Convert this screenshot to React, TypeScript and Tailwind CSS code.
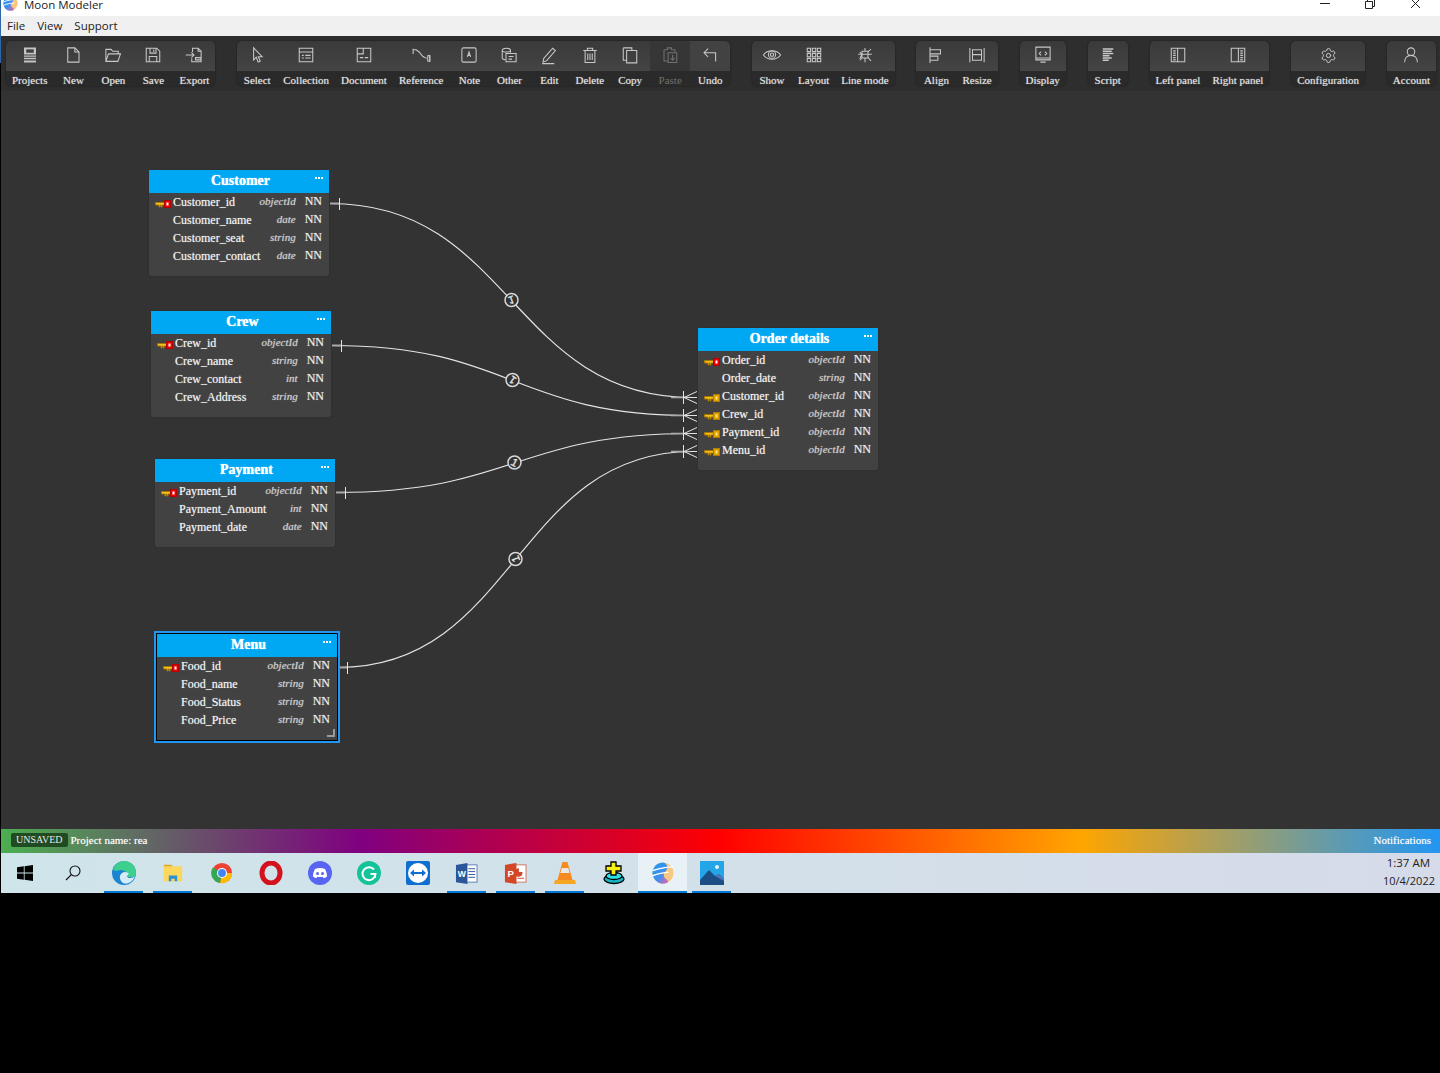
import React from 'react';
import { Settings } from 'lucide-react';

const S = 'stroke-[#c8c8c8] fill-none';
const HALO = '[text-shadow:0_0_1px_rgba(255,255,255,0.55)]';

// toolbar glyphs, all in a 24x24 box
const icons: Record<string, React.ReactNode> = {
  projects: (
    <g>
      <rect x="4" y="2" width="16" height="20" fill="#c4c4c4" stroke="none" />
      <rect x="7" y="4.500" width="10" height="4.500" fill="#3f3f3f" stroke="none" />
      <path d="M4 12h16M4 15h16M4 18.500h16" stroke="#3f3f3f" />
    </g>
  ),
  new: <path d="M5 2.500h9.500L20 8v13.500H5zM14.500 2.500V8H20" />,
  open: <path d="M2.500 20.500V4.500h7l2 2.500h7.500v3M2.500 20.500l3.500-10h16l-3.500 10z" />,
  save: <path d="M3 3h14l4 4v14H3zM8 3v6.500h8V3M13 4.500v3.500M7 21v-7h10v7" />,
  export: <path d="M10 8V3h7.500l4 4v14H9v-4.500M17.500 3v4h4M1 12h10.500M8.500 8.500L12 12l-3.500 3.500M14 15.500h7v3h-7z" />,
  select: <path d="M7.500 2.500v16l3.500-3.500 2.500 6.500 2.800-1.200-2.500-6h5z" />,
  collection: <path d="M3 3h18v18H3zM3 8h18M6.500 12.500H9M11 12.500h7M6.500 16H9M11 16h7" />,
  document: <path d="M3 3h18v18H3zM3 10.500h8V3M6.500 15.500H11M13 15.500h4.500" />,
  reference: <path d="M1.500 3.500v7M1.500 5h4l4 3 5 6 5 2.500M24 12.500v8M21 13l2.500-.5v8L21 20z" />,
  note: <path d="M4.500 2.500h15a2 2 0 0 1 2 2v15a2 2 0 0 1-2 2h-15a2 2 0 0 1-2-2v-15a2 2 0 0 1 2-2zM9.800 14.500l2.200-6.500 2.200 6.500M10.500 12.500h3" />,
  other: <path d="M3 6c0-4 11-4 11 0v3M3 6v10c0 1.200 1.500 2 4 2.300M3 6c0 2.800 11 2.800 11 0M8 10h13.500v11H8zM11.500 14H18M11.500 17.500H16" />,
  edit: <path d="M5 16.500L17 3l3.500 3L9 19.500l-5 2zM3 23.500h16" />,
  trash: <path d="M3 6h18M8.500 6V3h7v3M5.500 6v16h13V6M9 10v8.500M12 10v8.500M15 10v8.500" />,
  copy: <path d="M3 2.500h11.500V6M3 2.500V19h4.500M7.500 6H21v16.500H7.500z" />,
  paste: <path d="M4 5h4.500V2.500h5.500V5h4.500v3M4 5v15h5M9.500 9H21v13H9.500zM15.500 11.500v7.500M12.500 16l3 3 3-3" />,
  undo: <path d="M9.500 3.500L4 9l5.500 5.500M4 9h15.500v11.500" />,
  show: (
    <g>
      <path d="M0.500 12c5.500-7.500 17.500-7.500 23 0-5.500 7.500-17.500 7.500-23 0z" />
      <circle cx="12" cy="11.500" r="4.800" />
      <circle cx="12" cy="11.500" r="2.200" />
    </g>
  ),
  layout: <path d="M3 3h4.500v4.500H3zM9.800 3h4.500v4.500H9.800zM16.500 3H21v4.500h-4.500zM3 9.800h4.500v4.500H3zM9.800 9.800h4.500v4.500H9.800zM16.500 9.800H21v4.500h-4.500zM3 16.500h4.500V21H3zM9.800 16.500h4.500V21H9.800zM16.500 16.500H21V21h-4.500z" />,
  linemode: <path d="M3 11h18M5 8l3 3-3 6M20 4l-4 4v7l4 5M8 7h8v9H8zM12 2.500v5M12 16v5.500M8 16l-3 3" />,
  align: <path d="M4 1.500v21M4 5h14v5.500H4M4 13.500h10.500V19H4" />,
  resize: <path d="M2.500 2.500v19M21.500 2.500v19M6 5h12v6.500H6zM6 11.500h12V19H6z" />,
  display: <path d="M2.500 1.500h19v17h-19zM2.500 16h19M8.500 21.500h7M9.500 7.500L7 10l2.500 2.500M14.500 7.500L17 10l-2.500 2.500" />,
  script: <path d="M5 4h14M5 7h12M5 10h14M5 13h9M5 16h12M5 19h8" strokeWidth="2.200" />,
  leftpanel: <path d="M3 3h18v18H3zM11.500 3v18M5.500 6.500h3.500M5.500 9.500H9M5.500 12.500H9M5.500 15.500H9M5.500 18.500H9" />,
  rightpanel: <path d="M3 3h18v18H3zM12.500 3v18M15 6.500h3.500M15 9.500h3.500M15 12.500h3.500M15 15.500h3.500M15 18.500h3.500" />,
  account: <path d="M12 2.500a5 5 0 1 0 0 10 5 5 0 0 0 0-10zM3.500 21.500c0-5.500 3.500-9 8.500-9s8.500 3.500 8.500 9" />,
};

type Tool = { label: string; icon: string };

const groups: Tool[][] = [
  [
    { label: 'Projects', icon: 'projects' },
    { label: 'New', icon: 'new' },
    { label: 'Open', icon: 'open' },
    { label: 'Save', icon: 'save' },
    { label: 'Export', icon: 'export' },
  ],
  [
    { label: 'Select', icon: 'select' },
    { label: 'Collection', icon: 'collection' },
    { label: 'Document', icon: 'document' },
    { label: 'Reference', icon: 'reference' },
    { label: 'Note', icon: 'note' },
    { label: 'Other', icon: 'other' },
    { label: 'Edit', icon: 'edit' },
    { label: 'Delete', icon: 'trash' },
    { label: 'Copy', icon: 'copy' },
    { label: 'Paste', icon: 'paste' },
    { label: 'Undo', icon: 'undo' },
  ],
  [
    { label: 'Show', icon: 'show' },
    { label: 'Layout', icon: 'layout' },
    { label: 'Line mode', icon: 'linemode' },
  ],
  [
    { label: 'Align', icon: 'align' },
    { label: 'Resize', icon: 'resize' },
  ],
  [{ label: 'Display', icon: 'display' }],
  [{ label: 'Script', icon: 'script' }],
  [
    { label: 'Left panel', icon: 'leftpanel' },
    { label: 'Right panel', icon: 'rightpanel' },
  ],
  [{ label: 'Configuration', icon: 'gear' }],
  [{ label: 'Account', icon: 'account' }],
];

function ToolButton({ tool }: { tool: Tool }) {
  const disabled = tool.label === 'Paste';
  const topClass = disabled
    ? 'bg-[#363636]'
    : tool.label === 'Undo'
    ? 'bg-[#424242]'
    : 'bg-linear-to-b from-[#3a3a3a] to-[#444444]';
  return (
    <div className="flex flex-col min-w-10 items-stretch">
      <div className={`h-[30px] pb-[2px] flex items-center justify-center ${topClass}`}>
        {tool.icon === 'gear' ? (
          <Settings className="w-[17px] h-[17px] text-[#cccccc]" strokeWidth={1.4} />
        ) : (
          <svg
            viewBox="0 0 24 24"
            className={`w-[18px] h-[18px] overflow-visible ${S} ${disabled ? 'opacity-40' : ''}`}
            strokeWidth="1.400"
          >
            {icons[tool.icon]}
          </svg>
        )}
      </div>
      <div
        className={`h-[15px] px-[6px] text-center text-[11px] leading-[18px] whitespace-nowrap ${
          disabled ? 'text-[#707070]' : `text-[#e2e2e2] ${HALO}`
        }`}
      >
        {tool.label}
      </div>
    </div>
  );
}

function Key({ primary }: { primary: boolean }) {
  return (
    <svg viewBox="0 0 16 8" className="w-4 h-2 shrink-0 mt-[7px]">
      <path d="M0.500 2.500h9v2.500H7v2H6V5H5v2H4V5H0.500z" fill="#f2c21a" stroke="#a87400" strokeWidth="1" />
      <rect
        x="9.500"
        y="0.500"
        width="6"
        height="7"
        fill={primary ? '#ee0000' : '#e0a000'}
        stroke={primary ? '#b00000' : '#b07c00'}
      />
      <rect x="11.500" y="2.500" width="2" height="3" fill={primary ? '#ffffff' : '#ffe680'} />
    </svg>
  );
}

type Field = { name: string; type: string; key?: 'pk' | 'fk' };
type Table = { name: string; left: string; top: string; height: string; fields: Field[]; selected?: boolean };

const tables: Table[] = [
  {
    name: 'Customer',
    left: 'left-[148px]',
    top: 'top-[79px]',
    height: 'h-[106px]',
    fields: [
      { name: 'Customer_id', type: 'objectId', key: 'pk' },
      { name: 'Customer_name', type: 'date' },
      { name: 'Customer_seat', type: 'string' },
      { name: 'Customer_contact', type: 'date' },
    ],
  },
  {
    name: 'Crew',
    left: 'left-[150px]',
    top: 'top-[220px]',
    height: 'h-[106px]',
    fields: [
      { name: 'Crew_id', type: 'objectId', key: 'pk' },
      { name: 'Crew_name', type: 'string' },
      { name: 'Crew_contact', type: 'int' },
      { name: 'Crew_Address', type: 'string' },
    ],
  },
  {
    name: 'Payment',
    left: 'left-[154px]',
    top: 'top-[368px]',
    height: 'h-[88px]',
    fields: [
      { name: 'Payment_id', type: 'objectId', key: 'pk' },
      { name: 'Payment_Amount', type: 'int' },
      { name: 'Payment_date', type: 'date' },
    ],
  },
  {
    name: 'Menu',
    left: 'left-[156px]',
    top: 'top-[543px]',
    height: 'h-[106px]',
    selected: true,
    fields: [
      { name: 'Food_id', type: 'objectId', key: 'pk' },
      { name: 'Food_name', type: 'string' },
      { name: 'Food_Status', type: 'string' },
      { name: 'Food_Price', type: 'string' },
    ],
  },
  {
    name: 'Order details',
    left: 'left-[697px]',
    top: 'top-[237px]',
    height: 'h-[142px]',
    fields: [
      { name: 'Order_id', type: 'objectId', key: 'pk' },
      { name: 'Order_date', type: 'string' },
      { name: 'Customer_id', type: 'objectId', key: 'fk' },
      { name: 'Crew_id', type: 'objectId', key: 'fk' },
      { name: 'Payment_id', type: 'objectId', key: 'fk' },
      { name: 'Menu_id', type: 'objectId', key: 'fk' },
    ],
  },
];

function TableNode({ table }: { table: Table }) {
  return (
    <div
      className={`absolute w-[180px] ${table.left} ${table.top} ${table.height} bg-[#424242] ${
        table.selected ? 'shadow-[0_0_0_1px_#000000,0_0_0_3px_#2196f3]' : 'rounded-[2px] shadow-[0_0_1px_#1c1c1c]'
      }`}
    >
      <div className="relative h-[23px] pl-[3px] bg-[#00a8f3] text-center text-[14px] leading-[21px] font-bold text-white [text-shadow:0_0_1px_#ffffff]">
        {table.name}
        <div className="absolute top-[7px] right-[6px] flex gap-px">
          <span className="w-[2px] h-[2px] bg-white" />
          <span className="w-[2px] h-[2px] bg-white" />
          <span className="w-[2px] h-[2px] bg-white" />
        </div>
      </div>
      {table.fields.map((f) => (
        <div key={f.name} className="flex h-[18px] pl-[6px] pr-[7px] leading-[17px] text-[12px] whitespace-nowrap">
          <div className="w-[18px] shrink-0">{f.key && <Key primary={f.key === 'pk'} />}</div>
          <span className={`flex-1 leading-[19px] text-[#f4f4f4] ${HALO}`}>{f.name}</span>
          <span className={`italic text-[11px] text-[#cfcfcf] ${HALO}`}>{f.type}</span>
          <span className={`ml-[9px] text-[#eeeeee] ${HALO}`}>NN</span>
        </div>
      ))}
      {table.selected && (
        <div className="absolute right-[2px] bottom-[3px] w-2 h-2 border-r-2 border-b-2 border-[#9a9a9a]" />
      )}
    </div>
  );
}

// diagram wires: start at the table edge, end at the Order details edge
const links = [
  { x1: 329, y1: 112, y2: 306, mark: 'rotate(160) scale(-1 1)' },
  { x1: 331, y1: 254, y2: 324, mark: 'rotate(215)' },
  { x1: 335, y1: 401, y2: 342, mark: 'rotate(30)' },
  { x1: 337, y1: 576, y2: 360, mark: 'rotate(250)' },
];

function Relations() {
  const x2 = 696;
  const bend = 692;
  return (
    <svg className="absolute inset-0 w-full h-full" viewBox="0 0 1439 738">
      {links.map((l) => {
        const mx = (l.x1 + bend) / 2;
        const my = (l.y1 + l.y2) / 2;
        const y1 = l.y1 + 0.5;
        const y2 = l.y2 + 0.5;
        return (
          <g key={l.y1} stroke="#e4e4e4" fill="none">
            <path d={`M${l.x1} ${y1}C${mx} ${y1} ${mx} ${y2} ${bend} ${y2}H${x2}`} strokeWidth="1.200" />
            <path d={`M${l.x1} ${y1}h10`} stroke="#a8a8a8" strokeWidth="2" />
            <path d={`M${l.x1 + 9.5} ${l.y1 - 5}v12`} />
            <path d={`M${x2 - 26} ${y2}h13`} stroke="#a8a8a8" strokeWidth="1.600" />
            <path
              d={`M${x2 - 13.5} ${l.y2 - 6}v13M${x2 - 13} ${y2}L${x2} ${l.y2 - 5.5}M${x2 - 13} ${y2}L${x2} ${l.y2 + 6.5}`}
            />
            <circle cx={mx} cy={my} r="6.500" fill="#333333" stroke="#d8d8d8" strokeWidth="1.500" />
            <g transform={`translate(${mx} ${my}) ${l.mark}`}>
              <text
                y="3.800"
                textAnchor="middle"
                fontSize="11"
                fill="#e8e8e8"
                stroke="#e8e8e8"
                strokeWidth="0.300"
                fontFamily="'Liberation Sans', sans-serif"
              >
                1
              </text>
            </g>
          </g>
        );
      })}
    </svg>
  );
}

function MoonLogo({ size, id }: { size: string; id: string }) {
  return (
    <svg viewBox="0 0 24 24" className={size}>
      <defs>
        <linearGradient id={id} x1="0" y1="0" x2="1" y2="1">
          <stop offset="0" stopColor="#1e9bf0" />
          <stop offset="0.55" stopColor="#3f8fee" />
          <stop offset="1" stopColor="#ea62b4" />
        </linearGradient>
      </defs>
      <circle cx="12" cy="12" r="11.500" fill="#f9c880" />
      <path d="M12 .5A11.500 11.500 0 0 0 3 19c3 4 9 6 13 4 3-1.500 1-3.500-1.500-5-2-2-2.500-5 .5-8 3-3 2-9-3-9.500z" fill={`url(#${id})`} />
      <path d="M1 9.500C7 6.500 14 6 23 5M.5 15C6 12.500 11 12 18 11" stroke="#ffffff" strokeWidth="1.500" fill="none" />
    </svg>
  );
}

const taskIcons: { id: string; active?: boolean; focused?: boolean; node: React.ReactNode }[] = [
  {
    id: 'edge',
    active: true,
    node: (
      <svg viewBox="0 0 24 24" className="w-6 h-6">
        <circle cx="12" cy="12" r="12" fill="#1a85d0" />
        <path d="M1 9C3 2 9 0 12 0c7 0 12 5 12 12 0 3-3 5-6 4-3 0-4-2-3-4-2-3-7-4-10-2z" fill="#3ccf8e" />
        <path d="M10 12c2-2 6-1 7 1-2 1-3 3 0 4 2 0 4 0 6-2-2 6-8 9-12 7-4-3-4-8-1-10z" fill="#d5ecf6" />
      </svg>
    ),
  },
  {
    id: 'files',
    active: true,
    node: (
      <svg viewBox="0 0 24 24" className="w-[22px] h-5">
        <path d="M1 2h9l2 3h-11z" fill="#e2a520" />
        <rect x="1" y="4" width="22" height="18" fill="#fbd75b" />
        <path d="M7 15h10v7h-3v-3h-4v3H7z" fill="#2d8fd5" />
      </svg>
    ),
  },
  {
    id: 'chrome',
    node: (
      <svg viewBox="0 0 24 24" className="w-[22px] h-[22px]">
        <circle cx="12" cy="12" r="11" fill="#ea4335" />
        <path d="M12 12L2 6a11 11 0 0 0 8 17z" fill="#34a853" />
        <path d="M12 12h11a11 11 0 0 1-13 11z" fill="#fbbc05" />
        <circle cx="12" cy="12" r="5.500" fill="#ffffff" />
        <circle cx="12" cy="12" r="4.300" fill="#4285f4" />
      </svg>
    ),
  },
  {
    id: 'opera',
    node: (
      <svg viewBox="0 0 24 24" className="w-6 h-6">
        <ellipse cx="12" cy="12" rx="9" ry="10" fill="none" stroke="#d3121e" strokeWidth="5" />
      </svg>
    ),
  },
  {
    id: 'discord',
    node: (
      <svg viewBox="0 0 24 24" className="w-6 h-6">
        <circle cx="12" cy="12" r="12" fill="#5865f2" />
        <path d="M7 8c3-1.500 7-1.500 10 0 1.500 2.500 2 5 2 7.500-1.500 1-2.500 1.500-3.500 1.500l-.8-1.300c-1.800.5-3.600.5-5.400 0L8.500 17c-1 0-2-.5-3.500-1.500 0-2.500.5-5 2-7.500z" fill="#ffffff" />
        <circle cx="9.500" cy="12.500" r="1.500" fill="#5865f2" />
        <circle cx="14.500" cy="12.500" r="1.500" fill="#5865f2" />
      </svg>
    ),
  },
  {
    id: 'grammarly',
    node: (
      <svg viewBox="0 0 24 24" className="w-6 h-6">
        <circle cx="12" cy="12" r="12" fill="#15c39a" />
        <path d="M17 8.500a6.500 6.500 0 1 0 1.500 4.500h-5M18 13v4" stroke="#ffffff" strokeWidth="2" fill="none" />
      </svg>
    ),
  },
  {
    id: 'teamviewer',
    node: (
      <svg viewBox="0 0 24 24" className="w-6 h-6">
        <rect width="24" height="24" rx="2" fill="#0e6fd1" />
        <circle cx="12" cy="12" r="10" fill="#ffffff" />
        <path d="M4 12l4-3.500V11h8V8.500l4 3.500-4 3.500V13H8v2.500z" fill="#0e6fd1" />
      </svg>
    ),
  },
  {
    id: 'word',
    active: true,
    node: (
      <svg viewBox="0 0 24 24" className="w-[23px] h-[23px]">
        <rect x="10" y="3" width="13" height="18" fill="#ffffff" stroke="#5a7fb5" />
        <path d="M14 7h7M14 10h7M14 13h7M14 16h7" stroke="#2b579a" />
        <path d="M1 3l12-2v22L1 21z" fill="#2b579a" />
        <text x="7" y="15.500" textAnchor="middle" fontSize="9" fontWeight="700" fill="#ffffff" fontFamily="'Liberation Sans', sans-serif">W</text>
      </svg>
    ),
  },
  {
    id: 'powerpoint',
    active: true,
    node: (
      <svg viewBox="0 0 24 24" className="w-[23px] h-[23px]">
        <rect x="10" y="3" width="13" height="18" fill="#ffffff" stroke="#d2745a" />
        <path d="M15 7a4 4 0 1 0 4 4h-4zM14 17h7" stroke="#d24726" fill="#d24726" />
        <path d="M1 3l12-2v22L1 21z" fill="#d24726" />
        <text x="7" y="16" textAnchor="middle" fontSize="10" fontWeight="700" fill="#ffffff" fontFamily="'Liberation Sans', sans-serif">P</text>
      </svg>
    ),
  },
  {
    id: 'vlc',
    active: true,
    node: (
      <svg viewBox="0 0 24 24" className="w-6 h-6">
        <path d="M9.500 1h5l5 18h-15z" fill="#f58a1f" />
        <path d="M8.700 7h6.600l1.300 5H7.400z" fill="#e8e8e8" />
        <path d="M2 19h20l1 4H1z" fill="#f5a623" />
      </svg>
    ),
  },
  {
    id: 'plus',
    node: (
      <svg viewBox="0 0 24 24" className="w-6 h-6">
        <ellipse cx="12" cy="18" rx="10" ry="4.500" fill="#16b6c8" stroke="#000000" strokeWidth="1.300" />
        <ellipse cx="12" cy="15" rx="8" ry="3.500" fill="#2be0e8" stroke="#000000" strokeWidth="1.300" />
        <path d="M9 1h5v4h5v5h-5v4H9v-4H4V5h5z" fill="#f6ee18" stroke="#000000" strokeWidth="1.300" />
      </svg>
    ),
  },
  { id: 'moon', active: true, focused: true, node: <MoonLogo size="w-[22px] h-[22px]" id="moon-task" /> },
  {
    id: 'photos',
    active: true,
    node: (
      <svg viewBox="0 0 24 24" className="w-6 h-6">
        <rect width="24" height="24" fill="#24a5e8" />
        <circle cx="17" cy="6" r="2" fill="#e8f4fb" />
        <path d="M0 19l9-10 6 6 4-2 5 5v6H0z" fill="#1c4e86" />
        <path d="M15 15l4-2 5 5v2z" fill="#4f73bc" />
      </svg>
    ),
  },
];

export default function App() {
  return (
    <div className="min-h-[1073px] bg-black flex font-['Liberation_Serif',serif]">
      <div className="w-px shrink-0 flex flex-col">
        <div className="h-[63px] bg-[#2f66a8]" />
      </div>

      <div className="flex-1 h-[893px] flex flex-col min-w-0">
        {/* Title bar */}
        <div className="h-4 bg-white flex items-start font-['Open_Sans',sans-serif] overflow-hidden">
          <div className="ml-[2px] -mt-[4px]">
            <MoonLogo size="w-[15px] h-[15px]" id="moon-title" />
          </div>
          <span className="ml-[6px] text-[11.5px] leading-[10px] text-[#222222]">Moon Modeler</span>
          <div className="ml-auto flex items-start">
            <svg viewBox="0 0 120 16" className="w-[120px] h-4 mr-[5px] text-[#222222]" stroke="currentColor" fill="none">
              <path d="M5 3.500h10M50.500 1.500h7v7h-7zM52.500 1.500v-2h7v7h-2M96 -1l9 9M105 -1l-9 9" />
            </svg>
          </div>
        </div>

        {/* Menu bar */}
        <div className="h-5 bg-[#f0f0f0] flex items-center pl-[6px] gap-[12px] text-[11.5px] text-[#222222] font-['Open_Sans',sans-serif]">
          <span>File</span>
          <span>View</span>
          <span>Support</span>
        </div>

        {/* Toolbar */}
        <div className="h-[55px] bg-[#2e2e2e] flex pt-[5px] pl-[5px] gap-[21.85px]">
          {groups.map((group, i) => (
            <div
              key={i}
              className="h-[45px] flex rounded-[5px] overflow-hidden bg-[#2a2a2a] shadow-[0_0_2px_#1a1a1a]"
            >
              {group.map((tool) => (
                <ToolButton key={tool.label} tool={tool} />
              ))}
            </div>
          ))}
        </div>

        {/* Canvas */}
        <div className="relative flex-1 bg-[#333333] overflow-hidden">
          <Relations />
          {tables.map((t) => (
            <TableNode key={t.name} table={t} />
          ))}
        </div>

        {/* Status bar */}
        <div className="h-6 pb-[2px] bg-[linear-gradient(to_right,#4caf50,#800080,#ff0000,#ffa500,#2196f3)] flex items-center pl-[10px] pr-[9px] text-[11px] text-white">
          <span className="h-[14px] leading-[14px] px-[5px] rounded-[2px] bg-[#1f4a22] text-[10px] text-[#e8e8e8]">UNSAVED</span>
          <span className={`ml-[3px] ${HALO}`}>Project name: rea</span>
          <span className={`ml-auto ${HALO}`}>Notifications</span>
        </div>

        {/* Windows taskbar */}
        <div className="h-10 bg-linear-to-r from-[#cfe5ea] to-[#d6dbe9] flex font-['Open_Sans',sans-serif]">
          <div className="w-12 flex items-center justify-center">
            <svg viewBox="0 0 16 16" className="w-4 h-4 fill-black">
              <path d="M0 2.300l6.800-1v6.300H0zM7.600 1.200L16 0v7.600H7.600zM0 8.400h6.800v6.300l-6.800-1zM7.600 8.400H16V16l-8.400-1.200z" />
            </svg>
          </div>
          <div className="w-[48px] flex items-center justify-center">
            <svg viewBox="0 0 16 16" className="w-4 h-4" stroke="#111111" fill="none" strokeWidth="1.100">
              <circle cx="10" cy="6" r="5" />
              <path d="M6.500 9.500L1 15" />
            </svg>
          </div>
          <div className="flex ml-[2px]">
            {taskIcons.map((t) => (
              <div
                key={t.id}
                className={`w-[49px] flex items-center justify-center relative ${t.focused ? 'bg-[#e8f1f5]' : ''}`}
              >
                {t.node}
                {t.active && (
                  <span className={`absolute bottom-0 h-[2px] bg-[#0078d7] ${t.focused ? 'inset-x-0' : 'inset-x-[5px]'}`} />
                )}
              </div>
            ))}
          </div>
          <div className="ml-auto pr-[5px] pt-[1px] text-right text-[11.5px] leading-[18px] text-[#222222]">
            <div className="pr-[5px]">1:37 AM</div>
            <div className="text-[11px]">10/4/2022</div>
          </div>
        </div>
      </div>
    </div>
  );
}
